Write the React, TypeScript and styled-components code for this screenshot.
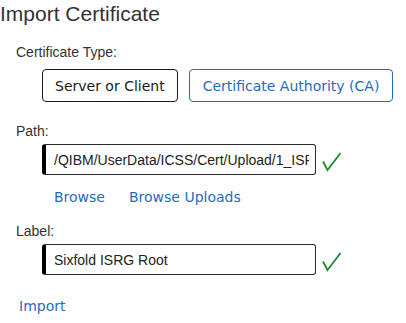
import React from "react";
import styled, { createGlobalStyle } from "styled-components";

const GlobalStyle = createGlobalStyle`
  html, body { margin: 0; padding: 0; background: #ffffff; }
  body { font-family: "Liberation Sans", Arial, sans-serif; color: #333333; }
`;

const Page = styled.div`
  width: 406px;
  height: 323px;
  overflow: hidden;
`;

const Title = styled.h2`
  margin: 0;
  padding-top: 2px;
  font-family: "Liberation Sans", Arial, sans-serif;
  font-weight: normal;
  font-size: 21px;
  line-height: 24px;
  color: #333333;
`;

const Form = styled.div`
  padding-left: 16px;
  display: flex;
  flex-direction: column;
`;

const FieldLabel = styled.div<{ $top: number }>`
  margin-top: ${(p) => p.$top}px;
  font-size: 14px;
  line-height: 16px;
  color: #333333;
`;

const Indented = styled.div<{ $top: number }>`
  margin-top: ${(p) => p.$top}px;
  margin-left: 26px;
  display: flex;
  align-items: center;
`;

const ToggleButton = styled.button<{ $selected?: boolean }>`
  box-sizing: border-box;
  height: 33px;
  padding: 2px 12px 0;
  line-height: 29px;
  font-family: "DejaVu Sans", Verdana, sans-serif;
  font-size: 14px;
  background: #ffffff;
  border-radius: 4px;
  border: 1px solid ${(p) => (p.$selected ? "#1a1a1a" : "#1f6cc2")};
  color: ${(p) => (p.$selected ? "#1a1a1a" : "#1f6cc2")};
  cursor: pointer;
  & + & {
    margin-left: 11px;
    padding: 2px 13px 0;
  }
`;

const TextInput = styled.input`
  box-sizing: border-box;
  width: 274px;
  height: 31px;
  padding: 0 6px 0 8px;
  border: 1px solid #2a2a2a;
  border-left: 4px solid #000000;
  border-radius: 3px;
  font-family: "Liberation Sans", Arial, sans-serif;
  font-size: 14px;
  color: #222222;
  background: #ffffff;
  outline: none;
`;

const Check = styled.svg`
  margin-left: 6px;
  margin-top: 4px;
  flex: none;
`;

const LinkRow = styled.div<{ $top: number; $left: number }>`
  margin-top: ${(p) => p.$top}px;
  margin-left: ${(p) => p.$left}px;
  display: flex;
  gap: 24px;
`;

const Link = styled.a`
  font-family: "DejaVu Sans", Verdana, sans-serif;
  font-size: 14px;
  line-height: 17px;
  color: #1f6cc2;
  text-decoration: none;
  cursor: pointer;
`;

const CheckMark = () => (
  <Check width="20" height="20" viewBox="0 0 20 20">
    <path
      d="M1 9.5 L5.5 18 L18.5 1"
      fill="none"
      stroke="#1f8a35"
      strokeWidth="1.8"
      strokeLinejoin="miter"
    />
  </Check>
);

export default function App() {
  return (
    <Page>
      <GlobalStyle />
      <Title>Import Certificate</Title>
      <Form>
        <FieldLabel $top={18}>Certificate Type:</FieldLabel>
        <Indented $top={9}>
          <ToggleButton $selected>Server or Client</ToggleButton>
          <ToggleButton>Certificate Authority (CA)</ToggleButton>
        </Indented>
        <FieldLabel $top={21}>Path:</FieldLabel>
        <Indented $top={5}>
          <TextInput readOnly value="/QIBM/UserData/ICSS/Cert/Upload/1_ISRG_Root.pem" />
          <CheckMark />
        </Indented>
        <LinkRow $top={14} $left={38}>
          <Link>Browse</Link>
          <Link>Browse Uploads</Link>
        </LinkRow>
        <FieldLabel $top={17}>Label:</FieldLabel>
        <Indented $top={5}>
          <TextInput readOnly value="Sixfold ISRG Root" />
          <CheckMark />
        </Indented>
        <LinkRow $top={23} $left={3}>
          <Link>Import</Link>
        </LinkRow>
      </Form>
    </Page>
  );
}
